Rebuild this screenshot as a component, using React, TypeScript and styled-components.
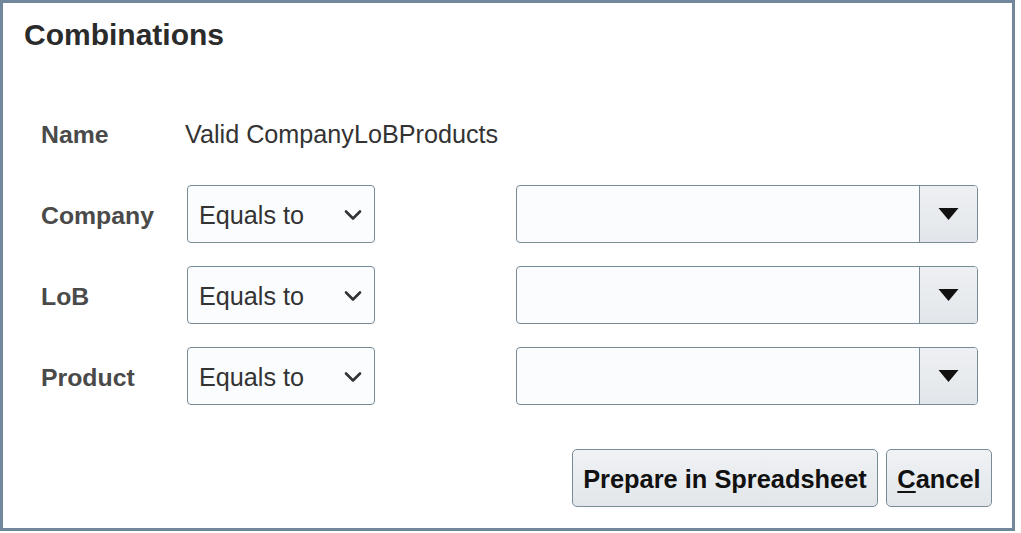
import React from "react";
import styled, { createGlobalStyle } from "styled-components";

const Global = createGlobalStyle`
  html, body { margin: 0; padding: 0; background: #ffffff; }
  body { font-family: "Liberation Sans", Arial, sans-serif; }
`;

const Dialog = styled.div`
  box-sizing: border-box;
  width: 1015px;
  height: 531px;
  border: 3px solid #71879b;
  background: #ffffff;
  display: flex;
  flex-direction: column;
  padding: 0 20px 21px 21px;
`;

const Title = styled.h1`
  margin: 0;
  padding-top: 14px;
  height: 101px;
  box-sizing: border-box;
  font-size: 30px;
  line-height: 36px;
  font-weight: 700;
  color: #2b2b2b;
`;

const Form = styled.div`
  display: grid;
  grid-template-columns: 146px 188px 141px 462px;
  grid-auto-rows: 58px;
  row-gap: 23px;
  padding-left: 17px;
  align-items: center;
`;

const Label = styled.div`
  font-size: 24.8px;
  font-weight: 700;
  color: #4a4a4a;
  padding-top: 3px;
`;

const Value = styled.div`
  grid-column: 2 / span 3;
  font-size: 25.2px;
  color: #333333;
  margin-left: -2px;
  padding-top: 3px;
`;

const Select = styled.div`
  box-sizing: border-box;
  height: 58px;
  border: 1.5px solid #7a8b98;
  border-radius: 4px;
  background: #fbfcfe;
  display: flex;
  align-items: center;
  justify-content: space-between;
  padding: 2px 12px 0 11px;
  font-size: 25.2px;
  color: #333333;
`;

const Combo = styled.div`
  grid-column: 4;
  box-sizing: border-box;
  height: 58px;
  border: 1.5px solid #7a8b98;
  border-radius: 4px;
  background: #fbfcfe;
  display: flex;
  overflow: hidden;
`;

const ComboInput = styled.div`
  flex: 1;
`;

const ComboButton = styled.div`
  width: 57px;
  border-left: 1.5px solid #7a8b98;
  background: linear-gradient(#eef0f3, #e2e6ea);
  display: flex;
  align-items: center;
  justify-content: center;
`;

const Footer = styled.div`
  margin-top: auto;
  display: flex;
  justify-content: flex-end;
  gap: 8px;
`;

const Button = styled.button<{ $w: number }>`
  box-sizing: border-box;
  height: 58px;
  padding: 2px 0 0;
  border: 1.5px solid #7a8b98;
  border-radius: 5px;
  background: linear-gradient(#f0f2f4, #e2e6ea);
  font-family: "Liberation Sans", Arial, sans-serif;
  font-size: 25.4px;
  font-weight: 700;
  color: #111111;
  width: ${(p) => p.$w}px;
  u { text-decoration-thickness: 2px; text-underline-offset: 3px; }
`;

const Chevron = () => (
  <svg width="18" height="12" viewBox="0 0 18 12">
    <path d="M2 2.5 L9 9.5 L16 2.5" fill="none" stroke="#333" strokeWidth="2.6" strokeLinecap="round" strokeLinejoin="round" />
  </svg>
);

const Triangle = () => (
  <svg width="21" height="14" viewBox="0 0 21 14">
    <path d="M0.5 1 L20.5 1 L10.5 13 Z" fill="#111" />
  </svg>
);

const rows = ["Company", "LoB", "Product"];

export default function App() {
  return (
    <>
      <Global />
      <Dialog>
        <Title>Combinations</Title>
        <Form>
          <Label>Name</Label>
          <Value>Valid CompanyLoBProducts</Value>
          {rows.map((r) => (
            <React.Fragment key={r}>
              <Label>{r}</Label>
              <Select>
                <span>Equals to</span>
                <Chevron />
              </Select>
              <Combo>
                <ComboInput />
                <ComboButton>
                  <Triangle />
                </ComboButton>
              </Combo>
            </React.Fragment>
          ))}
        </Form>
        <Footer>
          <Button $w={306}>Prepare in Spreadsheet</Button>
          <Button $w={106}>
            <u>C</u>ancel
          </Button>
        </Footer>
      </Dialog>
    </>
  );
}
